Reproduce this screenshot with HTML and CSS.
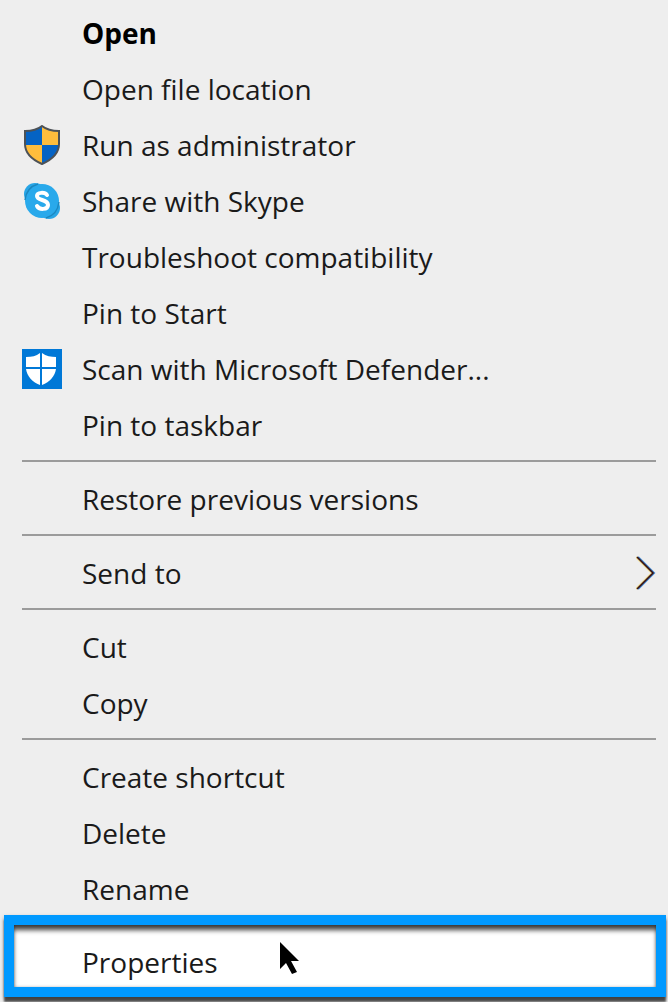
FILE: index.html
```html
<!DOCTYPE html>
<html lang="en">
<head>
  <meta charset="UTF-8">
  <meta name="viewport" content="width=device-width, initial-scale=1.0">
  <title>Context menu</title>
  <link rel="stylesheet" href="styles.css">
</head>
<body>
  <div class="menu" role="menu">
    <button class="item default" role="menuitem"><span class="icon"></span>Open</button>
    <button class="item" role="menuitem"><span class="icon"></span>Open file location</button>
    <button class="item" role="menuitem">
      <span class="icon">
        <svg width="40" height="40" viewBox="0 0 40 40" aria-hidden="true">
          <clipPath id="shield"><path d="M20 1C15 5 8 6 3 6V19C3 28 11 35 20 39C29 35 37 28 37 19V6C32 6 25 5 20 1Z"/></clipPath>
          <g clip-path="url(#shield)">
            <path fill="#0563c4" d="M0 0H20V20H0ZM20 20H40V40H20Z"/>
            <path fill="#ffbd3c" d="M20 0H40V20H20ZM0 20H20V40H0Z"/>
          </g>
          <path fill="none" stroke="#4d5257" stroke-width="2" d="M20 1C15 5 8 6 3 6V19C3 28 11 35 20 39C29 35 37 28 37 19V6C32 6 25 5 20 1Z"/>
        </svg>
      </span>Run as administrator
    </button>
    <button class="item" role="menuitem">
      <span class="icon">
        <svg width="40" height="40" viewBox="0 0 40 40" aria-hidden="true">
          <circle cx="13" cy="13" r="11" fill="#27a5e6"/>
          <circle cx="27" cy="27" r="11" fill="#27a5e6"/>
          <circle cx="20" cy="20" r="17" fill="#29a9eb"/>
          <path fill="none" stroke="#1b87bf" stroke-width="1.4" d="M3 19C4 11 9 5 16 3M37 21C36 29 31 35 24 37"/>
          <path fill="none" stroke="#fff" stroke-width="4" stroke-linecap="round" d="M25 14C23 11 15 11 15 15C15 20 26 18 26 24C26 29 17 29 15 25"/>
        </svg>
      </span>Share with Skype
    </button>
    <button class="item" role="menuitem"><span class="icon"></span>Troubleshoot compatibility</button>
    <button class="item" role="menuitem"><span class="icon"></span>Pin to Start</button>
    <button class="item" role="menuitem">
      <span class="icon">
        <svg width="40" height="40" viewBox="0 0 40 40" aria-hidden="true">
          <path fill="#0078d7" d="M0 0H40V40H0Z"/>
          <path fill="#fff" d="M18 4V18H4V8C10 8 14 7 18 4ZM20 4C24 7 29 8 34 8V18H20ZM4 20H18V36C10 33 5 27 4 20ZM20 20H34C33 27 28 33 20 36Z"/>
        </svg>
      </span>Scan with Microsoft Defender...
    </button>
    <button class="item" role="menuitem"><span class="icon"></span>Pin to taskbar</button>
    <hr>
    <button class="item" role="menuitem"><span class="icon"></span>Restore previous versions</button>
    <hr>
    <button class="item" role="menuitem" aria-haspopup="true">
      <span class="icon"></span>Send to
      <svg class="arrow" width="20" height="36" viewBox="0 0 20 36" aria-hidden="true">
        <path stroke="#ecd98c" d="M0 2L16 18L0 34"/>
        <path stroke="#3c86d2" d="M2 2L18 18L2 34"/>
        <path stroke="#3a1010" stroke-width="1.6" d="M1 2L17 18L1 34"/>
      </svg>
    </button>
    <hr>
    <button class="item" role="menuitem"><span class="icon"></span>Cut</button>
    <button class="item" role="menuitem"><span class="icon"></span>Copy</button>
    <hr>
    <button class="item" role="menuitem"><span class="icon"></span>Create shortcut</button>
    <button class="item" role="menuitem"><span class="icon"></span>Delete</button>
    <button class="item" role="menuitem"><span class="icon"></span>Rename</button>
    <div class="highlight">
      <button class="item" role="menuitem"><span class="icon"></span>Properties</button>
      <svg class="cursor" width="22" height="36" viewBox="0 0 22 36" aria-hidden="true">
        <path d="M1 1V28L7 22L13 33L18 31L12 20H20Z"/>
      </svg>
    </div>
  </div>
</body>
</html>
```
FILE: styles.css
```css
* {
  box-sizing: border-box;
}
body {
  margin: 0;
  background-color: #eeeeee;
  font-family: "Open Sans", "Noto Sans", sans-serif;
  color: #1a1a1a;
}
.menu {
  padding: 6px 0 5px;
  overflow: hidden;
}
.item {
  display: flex;
  align-items: center;
  width: 100%;
  height: 56px;
  padding: 0 12px 3px 22px;
  border: none;
  background: none;
  color: inherit;
  font-family: inherit;
  font-size: 28px;
  line-height: 40px;
  text-align: left;
}
.default {
  color: #000;
  font-weight: bold;
}
.icon {
  flex: none;
  width: 40px;
  height: 40px;
  margin-right: 20px;
}
.icon svg {
  display: block;
}
.arrow {
  margin-left: auto;
  fill: none;
  stroke-width: 2;
}
hr {
  height: 2px;
  margin: 6px 12px 10px 22px;
  border: none;
  background-color: #9b9b9b;
}
/* callout frame around the last item */
.highlight {
  position: relative;
  margin: -3px 2px 0 4px;
  padding-top: 12px;
  border: 10px solid #0099ff;
  background-color: #fff;
  box-shadow: 0 5px 2px rgba(0, 0, 0, 0.65), 0 2px 4px rgba(0, 0, 0, 0.3), inset 0 6px 5px -1px rgba(0, 0, 0, 0.75), inset 0 0 3px rgba(0, 0, 0, 0.3);
}
.highlight .item {
  height: 50px;
  padding: 0 12px 0 8px;
}
.cursor {
  position: absolute;
  left: 265px;
  top: 16px;
}
```
